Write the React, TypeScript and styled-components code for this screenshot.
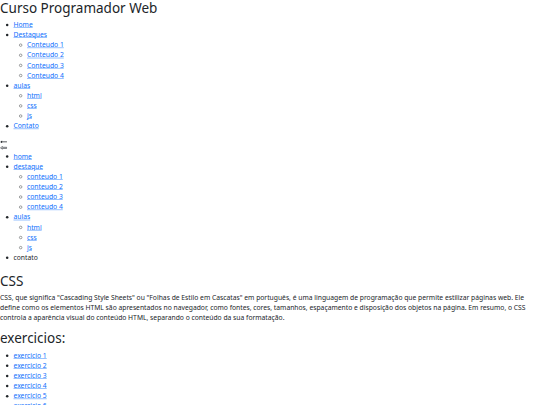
import React from "react";
import styled, { createGlobalStyle } from "styled-components";

const Global = createGlobalStyle`
  html, body { margin: 0; padding: 0; background: #fff; overflow: hidden; }
  body {
    font-family: "Noto Sans", "Open Sans", sans-serif;
    font-size: 16px;
    line-height: 1.5;
    color: #212529;
  }
`;

/* The reference is a 1280px-wide page photographed at 540px: the page is laid
   out at its natural size and scaled down as a whole. */
const Viewport = styled.div`
  width: 1280px;
  transform: scale(0.421875);
  transform-origin: 0 0;
`;

const Page = styled.div`
  display: flex;
  flex-direction: column;
`;

const Heading = styled.h1<{ $gapTop?: number }>`
  font-weight: 400;
  font-size: 32px;
  line-height: 1.2;
  margin: ${(p) => p.$gapTop ?? 0}px 0 8px 0;
  color: #212529;
`;

const List = styled.ul<{ $nested?: boolean }>`
  margin: 0 0 ${(p) => (p.$nested ? 0 : 16)}px 0;
  padding-left: 32px;
  list-style-type: ${(p) => (p.$nested ? "circle" : "disc")};
`;

const Item = styled.li``;

const Link = styled.a`
  color: #0d6efd;
  text-decoration: underline;
`;

const Toggles = styled.div`
  display: flex;
  flex-direction: column;
  margin-top: 3px;
`;

const ToggleRow = styled.div`
  height: 14.2px;
  display: flex;
  align-items: center;
`;

const ArrowIcon = styled.svg`
  display: block;
  width: 17px;
  height: 9px;
`;

const Paragraph = styled.p`
  margin: 0 0 16px 0;
`;

type NavItem = { label: string; children?: string[]; plain?: boolean };

const nav1: NavItem[] = [
  { label: "Home" },
  { label: "Destaques", children: ["Conteudo 1", "Conteudo 2", "Conteudo 3", "Conteudo 4"] },
  { label: "aulas", children: ["html", "css", "js"] },
  { label: "Contato" },
];

const nav2: NavItem[] = [
  { label: "home" },
  { label: "destaque", children: ["conteudo 1", "conteudo 2", "conteudo 3", "conteudo 4"] },
  { label: "aulas", children: ["html", "css", "js"] },
  { label: "contato", plain: true },
];

function Nav({ items }: { items: NavItem[] }) {
  return (
    <List>
      {items.map((it) => (
        <Item key={it.label}>
          {it.plain ? it.label : <Link href="#">{it.label}</Link>}
          {it.children && (
            <List $nested>
              {it.children.map((c) => (
                <Item key={c}>
                  <Link href="#">{c}</Link>
                </Item>
              ))}
            </List>
          )}
        </Item>
      ))}
    </List>
  );
}

export default function App() {
  return (
    <Viewport>
      <Global />
      <Page>
        <Heading>Curso Programador Web</Heading>
        <Nav items={nav1} />
        <Toggles>
          <ToggleRow>
            <ArrowIcon viewBox="0 0 17 9">
              <path d="M0.5 4.5 L5 1.2 L5 3.6 L16.5 3.6 L16.5 5.4 L5 5.4 L5 7.8 Z" fill="#212529" />
            </ArrowIcon>
          </ToggleRow>
          <ToggleRow>
            <ArrowIcon viewBox="0 0 17 9">
              <path d="M1.2 4.5 L5.8 1.2 L5.8 3.2 L16 3.2 L16 5.8 L5.8 5.8 L5.8 7.8 Z" fill="none" stroke="#3a3f45" strokeWidth="1.6" strokeLinejoin="round" />
            </ArrowIcon>
          </ToggleRow>
        </Toggles>
        <Nav items={nav2} />
        <Heading $gapTop={9}>CSS</Heading>
        <Paragraph>
          CSS, que significa "Cascading Style Sheets" ou "Folhas de Estilo em Cascatas" em português, é uma linguagem de programação que permite estilizar páginas web. Ele define como os elementos HTML são apresentados no navegador, como fontes, cores, tamanhos, espaçamento e disposição dos objetos na página. Em resumo, o CSS controla a aparência visual do conteúdo HTML, separando o conteúdo da sua formatação.
        </Paragraph>
        <Heading $gapTop={2}>exercicios:</Heading>
        <List>
          {[1, 2, 3, 4, 5, 6, 7, 8].map((n) => (
            <Item key={n}>
              <Link href="#">exercicio {n}</Link>
            </Item>
          ))}
        </List>
      </Page>
    </Viewport>
  );
}
